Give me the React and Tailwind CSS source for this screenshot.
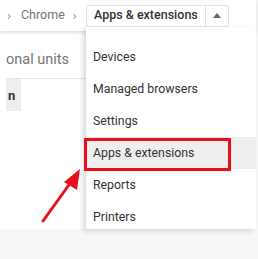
import React from "react";

const items = ["Devices", "Managed browsers", "Settings", "Apps & extensions", "Reports", "Printers"];

export default function App() {
  return (
    <div
      className="relative w-[258px] h-[259px] overflow-hidden bg-[#f7f7f7]"
      style={{ fontFamily: "Roboto, 'Liberation Sans', sans-serif" }}
    >
      <div className="w-[256px] h-[229px] bg-white flex flex-col">
        <div className="h-[31px] flex items-center shadow-[0_2px_3px_rgba(0,0,0,0.12)] relative z-10 bg-white">
          <div className="w-[86px] flex items-center shrink-0">
            <span className="ml-[7px] text-[13px] text-[#8a8a8a]">›</span>
            <span className="ml-[10px] text-[12.5px] text-[#757575]">Chrome</span>
            <span className="ml-[8px] text-[13px] text-[#8a8a8a]">›</span>
          </div>
          <div className="h-[22px] flex items-stretch border border-[#e3e3e3] rounded-[2px] shadow-[0_1px_1px_rgba(0,0,0,0.08)]">
            <div className="w-[118px] pl-[7px] flex items-center text-[12.5px] font-medium text-[#333]">Apps &amp; extensions</div>
            <div className="w-[23px] border-l border-[#e3e3e3] flex items-center justify-center">
              <svg width="8" height="5" viewBox="0 0 8 5"><path d="M0 5 L4 0 L8 5 Z" fill="#666" /></svg>
            </div>
          </div>
        </div>
        <div className="ml-[6px] flex flex-col">
          <div className="h-[48px] overflow-hidden flex items-center pt-[10px] border-b border-[#e6e6e6] w-[80px]">
            <span className="text-[14.5px] text-[#757575] whitespace-nowrap">onal units</span>
          </div>
          <div className="w-[15px] h-[32px] bg-[#eeeeee] flex items-center overflow-hidden pt-[1px]">
            <span className="text-[13px] font-bold text-[#333] ml-[2px]">n</span>
          </div>
        </div>
      </div>

      <div className="absolute left-[86px] top-[27px] w-[170px] h-[202px] bg-white shadow-[-3px_2px_5px_rgba(0,0,0,0.15)] pt-[14px] z-20">
        {items.map((t) => (
          <div
            key={t}
            className={`h-[32px] flex items-center pl-[7px] text-[12.3px] text-[#333] ${t === "Apps & extensions" ? "bg-[#eeeeee]" : ""}`}
          >
            {t}
          </div>
        ))}
      </div>

      <div className="absolute left-[84px] top-[138px] w-[147px] h-[33px] border-[3px] border-[#e8101a] z-30" />

      <svg className="absolute left-0 top-0 z-30" width="258" height="259" viewBox="0 0 258 259">
        <line x1="43" y1="221" x2="71" y2="182" stroke="#e8101a" strokeWidth="3" strokeLinecap="round" />
        <path d="M80 169 L64 182 L77 190 Z" fill="#e8101a" />
      </svg>
    </div>
  );
}
